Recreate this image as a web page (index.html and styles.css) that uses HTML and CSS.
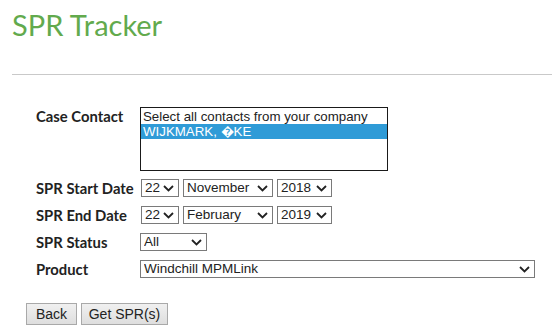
FILE: index.html
```html
<!DOCTYPE html>
<html>
<head>
<meta charset="utf-8">
<link rel="stylesheet" href="styles.css">
</head>
<body>
<div class="page">
  <h1 class="title">SPR Tracker</h1>
  <hr class="rule">
  <form class="form">
    <div class="grid">
      <label class="label">Case Contact</label>
      <div class="listbox">
        <div class="opt">Select all contacts from your company</div>
        <div class="opt selected">WIJKMARK, &#xFFFD;KE</div>
      </div>

      <label class="label">SPR Start Date</label>
      <div class="controls">
        <select class="sel day"><option>22</option></select>
        <select class="sel month"><option>November</option></select>
        <select class="sel year"><option>2018</option></select>
      </div>

      <label class="label">SPR End Date</label>
      <div class="controls">
        <select class="sel day"><option>22</option></select>
        <select class="sel month"><option>February</option></select>
        <select class="sel year"><option>2019</option></select>
      </div>

      <label class="label">SPR Status</label>
      <div class="controls">
        <select class="sel status"><option>All</option></select>
      </div>

      <label class="label">Product</label>
      <div class="controls">
        <select class="sel product"><option>Windchill MPMLink</option></select>
      </div>
    </div>
    <div class="buttons">
      <button type="button" class="btn btn-back">Back</button>
      <button type="button" class="btn btn-get">Get SPR(s)</button>
    </div>
  </form>
</div>
</body>
</html>
```

FILE: styles.css
```css
html, body {
  margin: 0;
  padding: 0;
  background: #fff;
}

.page {
  padding-left: 12px;
}

.title {
  margin: 0;
  padding-top: 7px;
  font-family: "Lato", "Liberation Sans", sans-serif;
  font-weight: 400;
  font-size: 29px;
  line-height: 36px;
  color: #62aa4d;
}

.rule {
  margin: 31px 0 0 0;
  border: 0;
  border-top: 1px solid #c9c9c9;
  height: 0;
}

.form {
  padding: 32px 0 0 24px;
}

.grid {
  display: grid;
  grid-template-columns: 104px auto;
  row-gap: 8px;
  align-items: start;
}

.label {
  font-family: "Lato", "Liberation Sans", sans-serif;
  font-weight: 700;
  font-size: 14.8px;
  line-height: 19px;
  color: #222;
}

.listbox {
  width: 248px;
  height: 64px;
  box-sizing: border-box;
  border: 1px solid #1a1a1a;
  font-family: "Liberation Sans", Arial, sans-serif;
  font-size: 13.3px;
  color: #222;
  padding-top: 1px;
}

.opt {
  height: 15px;
  line-height: 15px;
  padding-left: 2px;
  white-space: nowrap;
}

.opt.selected {
  background: #2f9bd7;
  color: #fff;
}

.controls {
  display: flex;
  gap: 4px;
  margin-left: 1px;
}

.sel {
  -webkit-appearance: none;
  appearance: none;
  height: 18px;
  box-sizing: border-box;
  margin: 0;
  border: 1px solid #7a7a7a;
  border-radius: 0;
  background-color: #fff;
  background-image: url("data:image/svg+xml;utf8,<svg xmlns='http://www.w3.org/2000/svg' width='11' height='7' viewBox='0 0 11 7'><path d='M1 1 L5.5 5.5 L10 1' fill='none' stroke='%23222' stroke-width='1.8'/></svg>");
  background-repeat: no-repeat;
  background-position: right 4px center;
  font-family: "Liberation Sans", Arial, sans-serif;
  font-size: 13.5px;
  line-height: 16px;
  color: #222;
  padding: 0 18px 0 3px;
}

.day { width: 38px; }
.month { width: 90px; }
.year { width: 55px; }
.status { width: 67px; margin-left: -1px; }
.product { width: 395px; margin-left: -1px; }

.buttons {
  display: flex;
  gap: 4px;
  margin: 24px 0 0 -10px;
}

.btn {
  height: 22px;
  box-sizing: border-box;
  margin: 0;
  padding: 0 8px;
  border: 1px solid #a9a9a9;
  border-radius: 0;
  background: linear-gradient(#f0f0f0, #dedede);
  font-family: "Liberation Sans", Arial, sans-serif;
  font-size: 14px;
  color: #222;
}

.btn-back { width: 51px; padding: 0; }
.btn-get { width: 87px; padding: 0; }
```
